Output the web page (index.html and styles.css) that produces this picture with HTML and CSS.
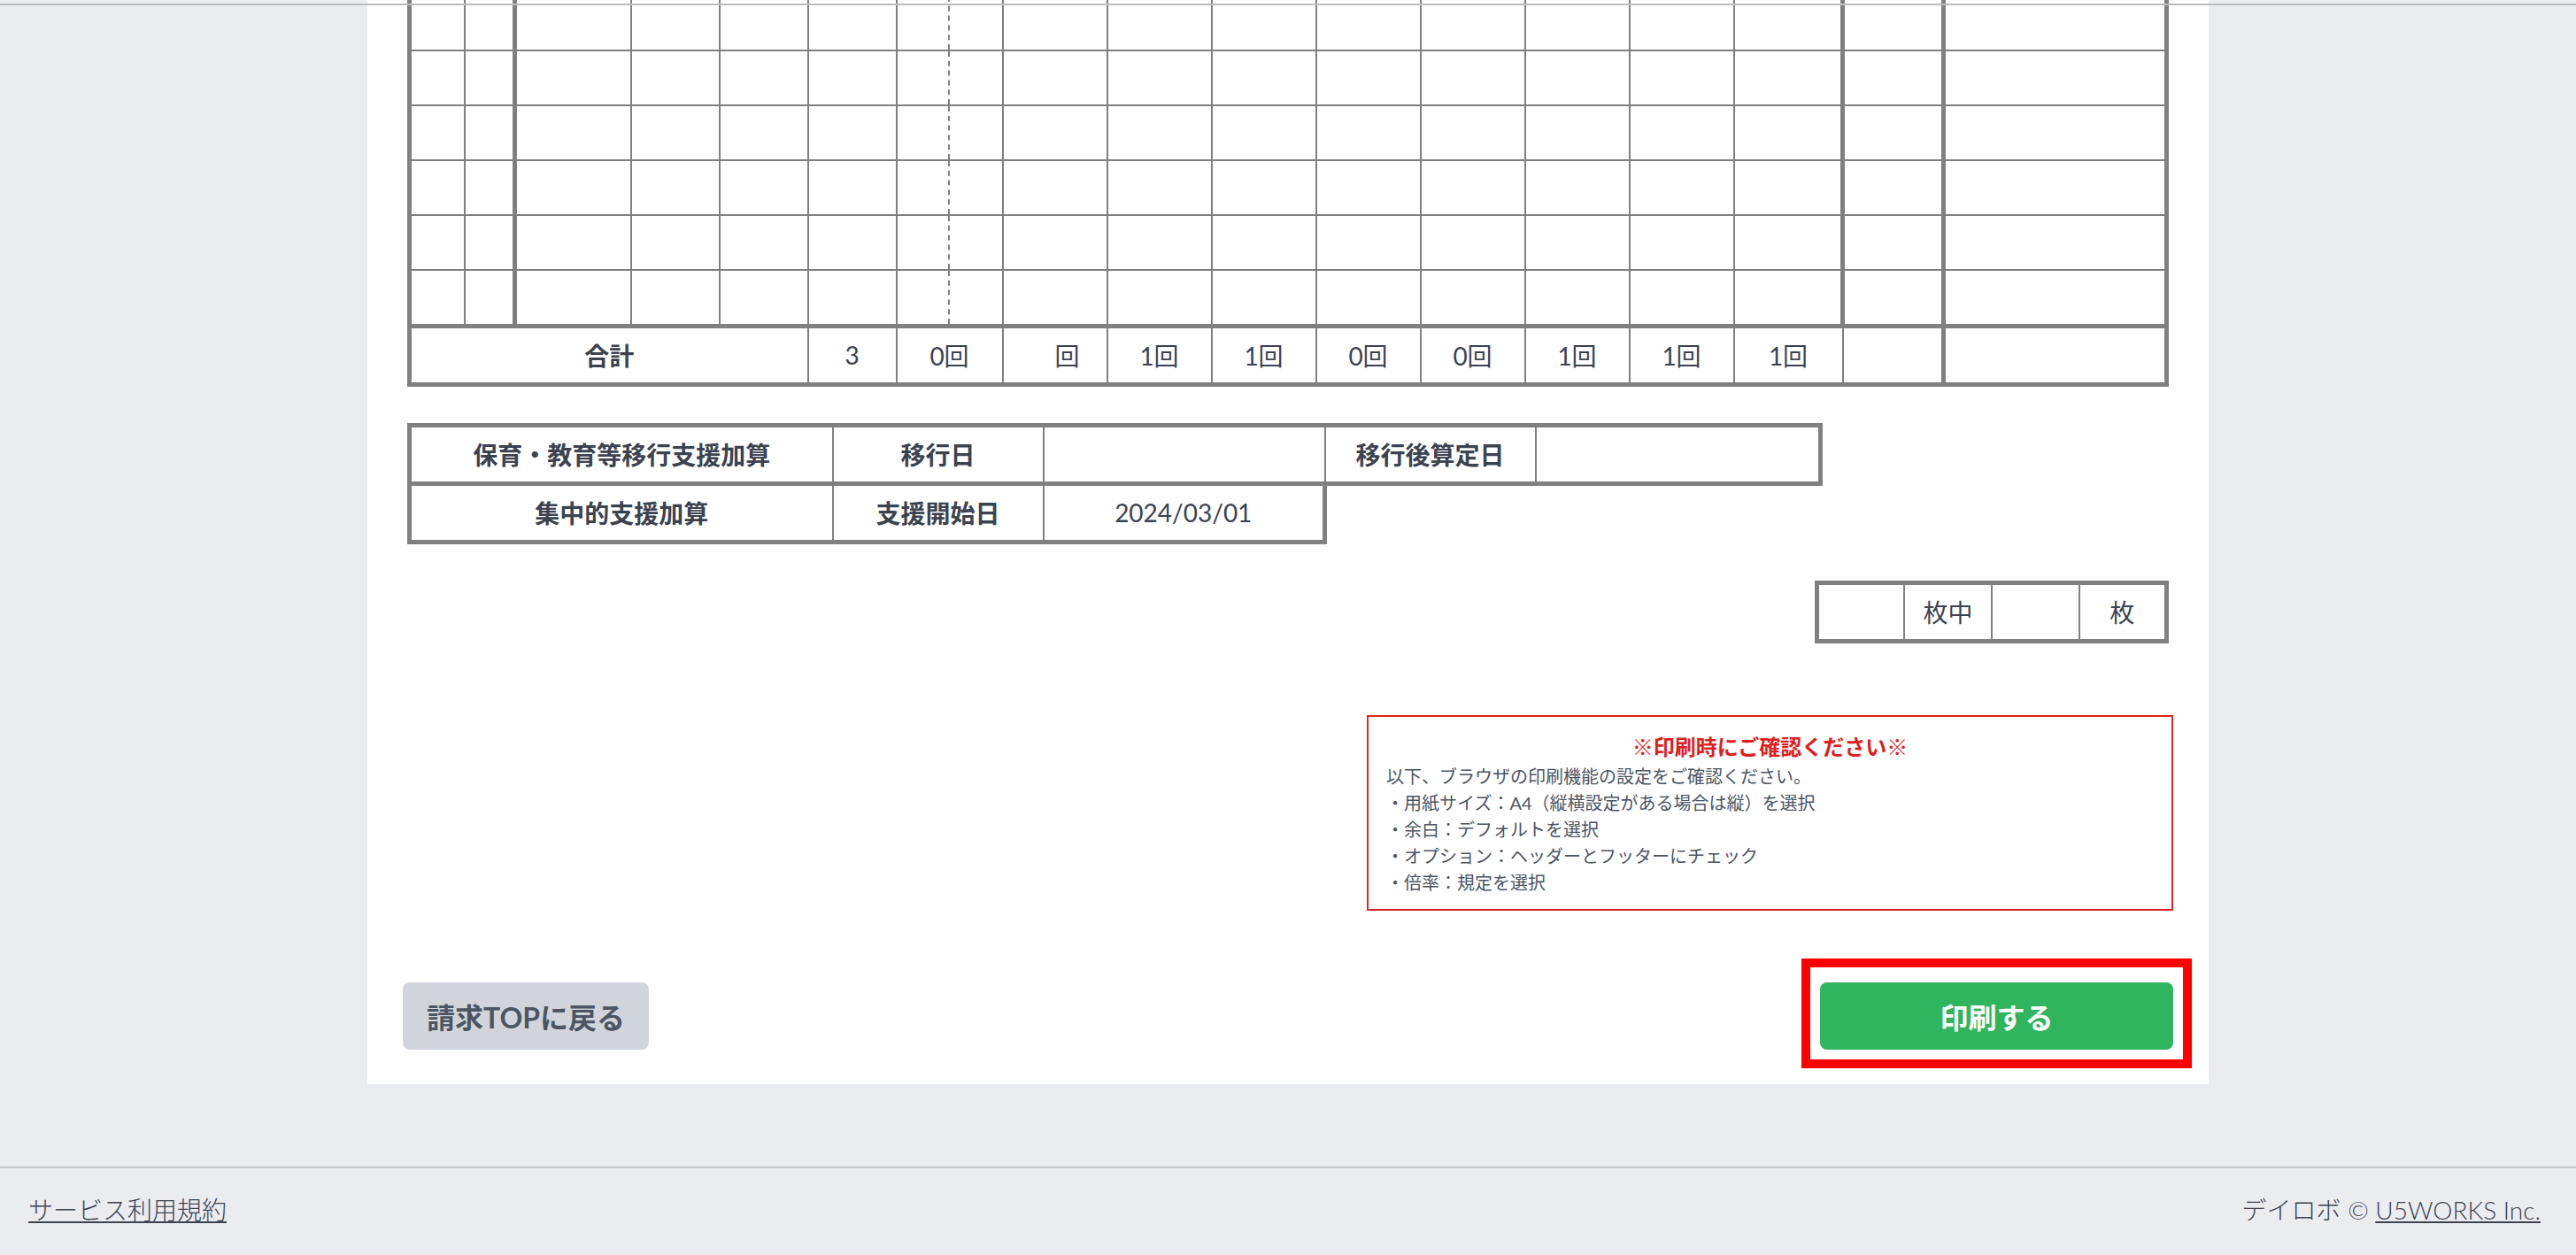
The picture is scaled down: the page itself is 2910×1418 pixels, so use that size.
FILE: index.html
```html
<!DOCTYPE html>
<html lang="ja">
<head>
    <meta charset="UTF-8">
    <meta name="viewport" content="width=device-width, initial-scale=1.0">
    <title>実績記録票 印刷</title>
    <link rel="stylesheet" href="styles.css">
</head>
<body>
    <div class="topbar"></div>

    <main class="sheet">
        <div class="paper">
            <table class="report">
                <colgroup>
                    <col class="c-62"><col class="c-57"><col class="c-131">
                    <col class="c-100"><col class="c-100"><col class="c-100">
                    <col class="c-59"><col class="c-61">
                    <col class="c-118"><col class="c-118"><col class="c-118"><col class="c-118">
                    <col class="c-118"><col class="c-118"><col class="c-118">
                    <col class="c-123"><col class="c-114"><col class="c-252">
                </colgroup>
                <tbody>
                    <tr><td></td><td></td><td></td><td></td><td></td><td></td><td></td><td></td><td></td><td></td><td></td><td></td><td></td><td></td><td></td><td></td><td></td><td></td></tr>
                    <tr><td></td><td></td><td></td><td></td><td></td><td></td><td></td><td></td><td></td><td></td><td></td><td></td><td></td><td></td><td></td><td></td><td></td><td></td></tr>
                    <tr><td></td><td></td><td></td><td></td><td></td><td></td><td></td><td></td><td></td><td></td><td></td><td></td><td></td><td></td><td></td><td></td><td></td><td></td></tr>
                    <tr><td></td><td></td><td></td><td></td><td></td><td></td><td></td><td></td><td></td><td></td><td></td><td></td><td></td><td></td><td></td><td></td><td></td><td></td></tr>
                    <tr><td></td><td></td><td></td><td></td><td></td><td></td><td></td><td></td><td></td><td></td><td></td><td></td><td></td><td></td><td></td><td></td><td></td><td></td></tr>
                    <tr><td></td><td></td><td></td><td></td><td></td><td></td><td></td><td></td><td></td><td></td><td></td><td></td><td></td><td></td><td></td><td></td><td></td><td></td></tr>
                </tbody>
                <tfoot>
                    <tr>
                        <th colspan="5">合計</th>
                        <td>3</td>
                        <td colspan="2">0回</td>
                        <td>　回</td>
                        <td>1回</td>
                        <td>1回</td>
                        <td>0回</td>
                        <td>0回</td>
                        <td>1回</td>
                        <td>1回</td>
                        <td>1回</td>
                        <td></td>
                        <td class="last"></td>
                    </tr>
                </tfoot>
            </table>

            <table class="kasan">
                <colgroup>
                    <col class="k-name"><col class="k-label"><col class="k-value"><col class="k-label"><col class="k-value2">
                </colgroup>
                <tr>
                    <th>保育・教育等移行支援加算</th>
                    <th>移行日</th>
                    <td></td>
                    <th>移行後算定日</th>
                    <td></td>
                </tr>
                <tr>
                    <th>集中的支援加算</th>
                    <th>支援開始日</th>
                    <td>2024/03/01</td>
                </tr>
            </table>

            <div class="pager-row">
                <table class="pager">
                    <tr>
                        <td></td>
                        <td>枚中</td>
                        <td></td>
                        <td>枚</td>
                    </tr>
                </table>
            </div>
        </div>

        <div class="notice-row">
            <div class="notice">
                <p class="notice-title">※印刷時にご確認ください※</p>
                <p>以下、ブラウザの印刷機能の設定をご確認ください。</p>
                <p>・用紙サイズ：A4（縦横設定がある場合は縦）を選択</p>
                <p>・余白：デフォルトを選択</p>
                <p>・オプション：ヘッダーとフッターにチェック</p>
                <p>・倍率：規定を選択</p>
            </div>
        </div>

        <div class="actions">
            <button class="btn btn-back">請求TOPに戻る</button>
            <span class="print-target">
                <button class="btn btn-print" onclick="window.print()">印刷する</button>
            </span>
        </div>
    </main>

    <footer class="footer">
        <a href="#">サービス利用規約</a>
        <span>デイロボ © <a href="#">U5WORKS Inc.</a></span>
    </footer>
</body>
</html>
```

FILE: styles.css
```css
* {
    box-sizing: border-box;
}
body {
    margin: 0;
    background-color: #ebecf0;
    color: #3c4350;
    font-family: Lato, "Noto Sans CJK JP", sans-serif;
}
.topbar {
    position: fixed;
    top: 4px;
    left: 0;
    right: 0;
    height: 2px;
    background-color: #bdbdbd;
    z-index: 10;
}

/* white sheet, scrolled down past the upper rows */
.sheet {
    width: 2080px;
    margin: -6px auto 0;
    padding: 0 40px 39px;
    background-color: #fff;
}
.paper {
    width: 1990px;
    margin: 0 auto;
}
table {
    border-collapse: collapse;
    table-layout: fixed;
}

/* monthly record table */
.report {
    width: 1990px;
}
.report col.c-62 { width: 62px; }
.report col.c-57 { width: 57px; }
.report col.c-131 { width: 131px; }
.report col.c-100 { width: 100px; }
.report col.c-59 { width: 59px; }
.report col.c-61 { width: 61px; }
.report col.c-118 { width: 118px; }
.report col.c-123 { width: 123px; }
.report col.c-114 { width: 114px; }
.report col.c-252 { width: 252px; }
.report td, .report th {
    border: 2px solid #808080;
    padding: 0;
    text-align: center;
    vertical-align: middle;
    font-size: 28px;
    font-weight: 400;
    white-space: nowrap;
}
.report th {
    font-weight: 700;
}
.report tbody tr {
    height: 62px;
}
.report tbody tr:last-child {
    height: 63px;
}
.report tbody td:first-child {
    border-left-width: 5px;
}
.report tbody td:last-child {
    border-right-width: 5px;
}
.report tbody td:nth-child(3),
.report tbody td:nth-child(17),
.report tbody td:nth-child(18) {
    border-left-width: 5px;
}
.report tbody td:nth-child(7) {
    border-right-style: dashed;
}
.report tbody td:nth-child(8) {
    border-left-style: dashed;
}
.report tfoot tr {
    height: 66px;
}
.report tfoot td, .report tfoot th {
    border-top-width: 5px;
    border-bottom-width: 5px;
}
.report tfoot th {
    border-left-width: 5px;
}
.report tfoot td.last {
    border-left-width: 5px;
    border-right-width: 5px;
}

/* addition table */
.kasan {
    width: 1599px;
    margin-top: 41px;
}
.kasan col.k-name { width: 478px; }
.kasan col.k-label { width: 238px; }
.kasan col.k-value { width: 318px; }
.kasan col.k-value2 { width: 322px; }
.kasan tr {
    height: 66px;
}
.kasan th, .kasan td {
    border: 5px solid #808080;
    border-left-width: 2px;
    border-right-width: 2px;
    padding: 0;
    text-align: center;
    font-size: 28px;
    font-weight: 400;
}
.kasan th {
    font-weight: 700;
}
.kasan tr > :first-child {
    border-left-width: 5px;
}
.kasan tr > :last-child {
    border-right-width: 5px;
}

/* page counter */
.pager-row {
    display: flex;
    justify-content: flex-end;
    margin-top: 41px;
}
.pager {
    width: 400px;
}
.pager tr {
    height: 66px;
}
.pager td {
    border: 2px solid #808080;
    border-top-width: 5px;
    border-bottom-width: 5px;
    padding: 0;
    text-align: center;
    font-size: 28px;
    font-weight: 400;
}
.pager td:first-child {
    border-left-width: 5px;
}
.pager td:last-child {
    border-right-width: 5px;
}

/* print notice */
.notice-row {
    display: flex;
    justify-content: flex-end;
    margin-top: 81px;
}
.notice {
    width: 911px;
    border: 2px solid #dc2626;
    padding: 16px 20px 15px;
    color: #4b5563;
    font-size: 20px;
    line-height: 30px;
    font-weight: 400;
}
.notice p {
    margin: 0;
}
.notice .notice-title {
    color: #e01e1e;
    font-size: 24px;
    line-height: 36px;
    font-weight: 700;
    text-align: center;
}

/* buttons */
.actions {
    display: flex;
    justify-content: space-between;
    align-items: flex-start;
    margin-top: 81px;
}
.btn {
    height: 76px;
    border: none;
    border-radius: 8px;
    font-family: inherit;
    font-size: 32px;
    font-weight: 700;
    cursor: pointer;
}
.btn-back {
    padding: 0 27px;
    background-color: #d1d5db;
    color: #4b5563;
}
.btn-print {
    width: 399px;
    background-color: #2fb55d;
    color: #fff;
}
.print-target {
    position: relative;
    display: block;
}
.print-target::after {
    content: "";
    position: absolute;
    top: -27px;
    left: -21px;
    right: -21px;
    bottom: -21px;
    border: 10px solid #ff0000;
    pointer-events: none;
}

/* footer */
.footer {
    margin-top: 93px;
    border-top: 2px solid #c6c9ce;
    display: flex;
    justify-content: space-between;
    padding: 26px 40px 30px 32px;
    font-size: 28px;
    line-height: 42px;
    font-weight: 300;
    color: #3c4350;
}
.footer a {
    color: inherit;
}
```
